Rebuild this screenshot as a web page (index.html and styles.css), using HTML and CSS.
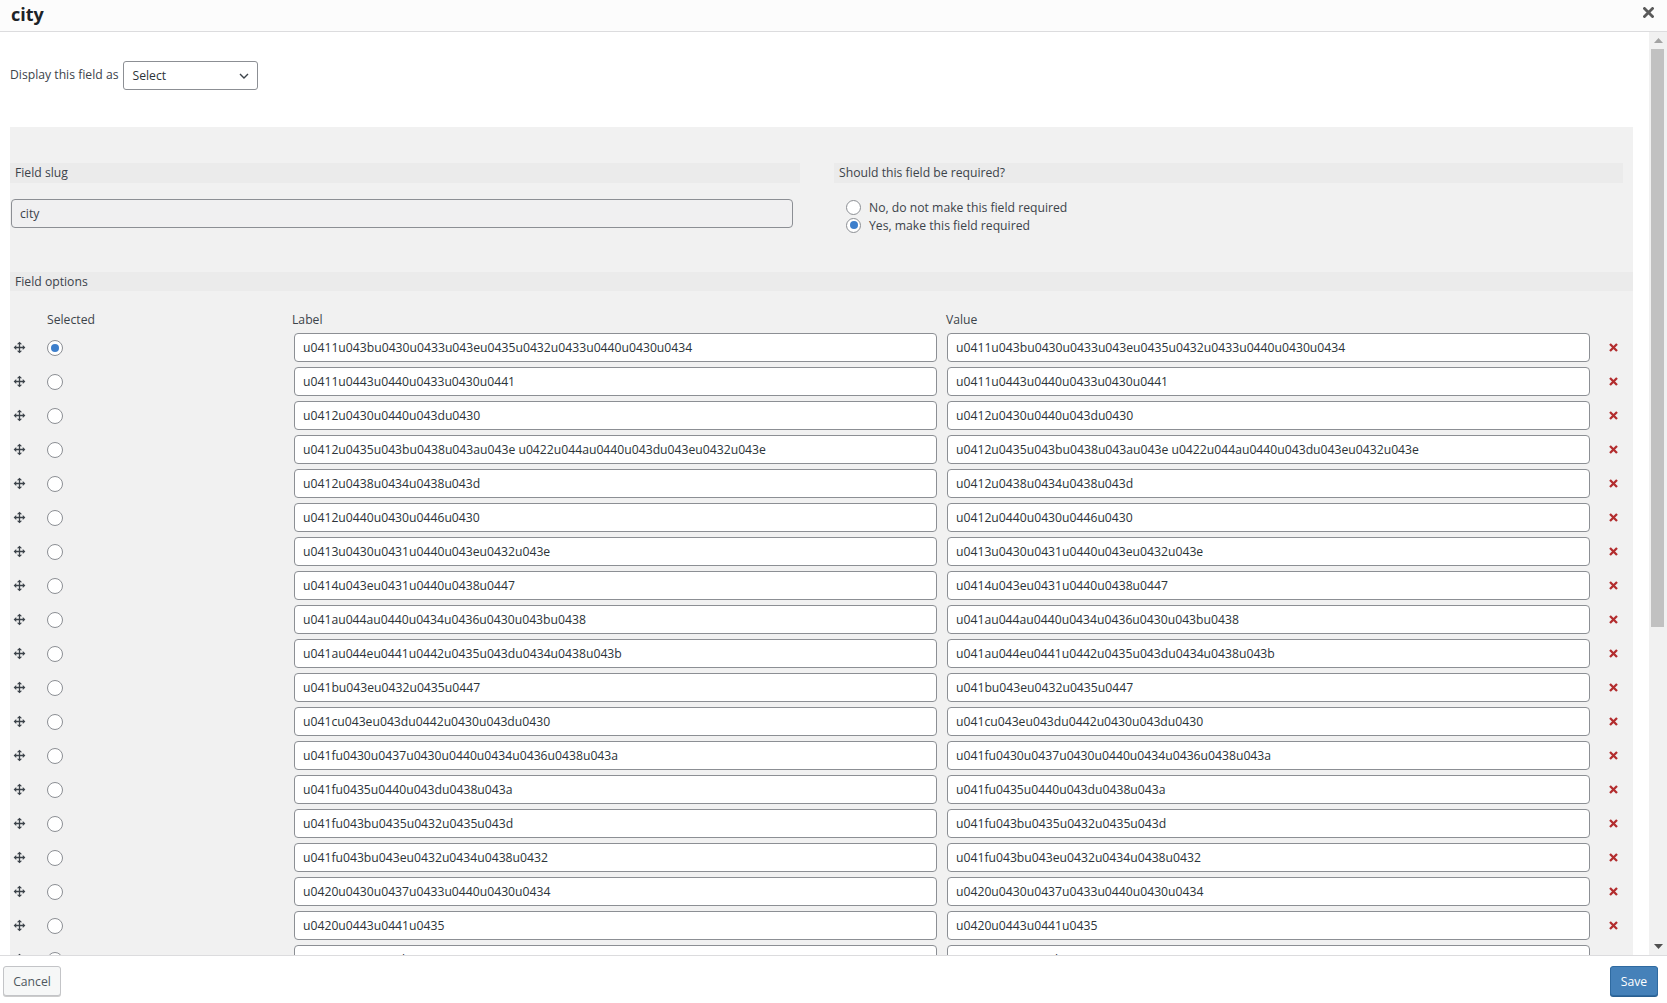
FILE: index.html
```html
<!DOCTYPE html>
<html lang="en">
<head>
<meta charset="utf-8">
<title>city</title>
<link rel="stylesheet" href="styles.css">
</head>
<body>
<div class="modal">
  <header class="modal-header">
    <h1 class="modal-title">city</h1>
    <button class="close-btn" aria-label="Close">
      <svg width="11" height="11" viewBox="0 0 11 11"><path d="M1.5 1.5l8 8M9.5 1.5l-8 8" stroke="#5a5a5a" stroke-width="2.8" stroke-linecap="square"/></svg>
    </button>
  </header>

  <div class="modal-body">
    <div class="content">
      <div class="display-row">
        <span class="display-label">Display this field as</span>
        <div class="select-box">
          <span>Select</span>
          <svg width="10" height="6" viewBox="0 0 10 6"><path d="M1 1l4 4 4-4" fill="none" stroke="#3c434a" stroke-width="1.4"/></svg>
        </div>
      </div>

      <div class="panel">
        <div class="two-col">
          <div class="col">
            <div class="section-bar">Field slug</div>
            <input class="slug-input" type="text" value="city" readonly>
          </div>
          <div class="col">
            <div class="section-bar">Should this field be required?</div>
            <div class="radio-list">
              <div class="radio-line"><span class="radio"></span><span>No, do not make this field required</span></div>
              <div class="radio-line"><span class="radio checked"></span><span>Yes, make this field required</span></div>
            </div>
          </div>
        </div>

        <div class="section-bar options-bar">Field options</div>

        <div class="opt-grid opt-head">
          <span></span>
          <span>Selected</span>
          <span class="head-label">Label</span>
          <span class="head-value">Value</span>
          <span></span>
        </div>

        <div class="opt-rows">
          <div class="opt-grid opt-row"><span class="drag"><svg width="13" height="13" viewBox="0 0 20 20"><path d="M19 10l-4 4v-3h-4v4h3l-4 4-4-4h3v-4H5v3l-4-4 4-4v3h4V5H6l4-4 4 4h-3v4h4V6z" fill="#3c434a"/></svg></span><span class="radio checked"></span><input class="opt-input" type="text" value="u0411u043bu0430u0433u043eu0435u0432u0433u0440u0430u0434"><input class="opt-input value-input" type="text" value="u0411u043bu0430u0433u043eu0435u0432u0433u0440u0430u0434"><span class="del"><svg width="9" height="9" viewBox="0 0 9 9"><path d="M1 1l7 7M8 1l-7 7" stroke="#b32d2e" stroke-width="2.3"/></svg></span></div>
          <div class="opt-grid opt-row"><span class="drag"><svg width="13" height="13" viewBox="0 0 20 20"><path d="M19 10l-4 4v-3h-4v4h3l-4 4-4-4h3v-4H5v3l-4-4 4-4v3h4V5H6l4-4 4 4h-3v4h4V6z" fill="#3c434a"/></svg></span><span class="radio"></span><input class="opt-input" type="text" value="u0411u0443u0440u0433u0430u0441"><input class="opt-input value-input" type="text" value="u0411u0443u0440u0433u0430u0441"><span class="del"><svg width="9" height="9" viewBox="0 0 9 9"><path d="M1 1l7 7M8 1l-7 7" stroke="#b32d2e" stroke-width="2.3"/></svg></span></div>
          <div class="opt-grid opt-row"><span class="drag"><svg width="13" height="13" viewBox="0 0 20 20"><path d="M19 10l-4 4v-3h-4v4h3l-4 4-4-4h3v-4H5v3l-4-4 4-4v3h4V5H6l4-4 4 4h-3v4h4V6z" fill="#3c434a"/></svg></span><span class="radio"></span><input class="opt-input" type="text" value="u0412u0430u0440u043du0430"><input class="opt-input value-input" type="text" value="u0412u0430u0440u043du0430"><span class="del"><svg width="9" height="9" viewBox="0 0 9 9"><path d="M1 1l7 7M8 1l-7 7" stroke="#b32d2e" stroke-width="2.3"/></svg></span></div>
          <div class="opt-grid opt-row"><span class="drag"><svg width="13" height="13" viewBox="0 0 20 20"><path d="M19 10l-4 4v-3h-4v4h3l-4 4-4-4h3v-4H5v3l-4-4 4-4v3h4V5H6l4-4 4 4h-3v4h4V6z" fill="#3c434a"/></svg></span><span class="radio"></span><input class="opt-input" type="text" value="u0412u0435u043bu0438u043au043e u0422u044au0440u043du043eu0432u043e"><input class="opt-input value-input" type="text" value="u0412u0435u043bu0438u043au043e u0422u044au0440u043du043eu0432u043e"><span class="del"><svg width="9" height="9" viewBox="0 0 9 9"><path d="M1 1l7 7M8 1l-7 7" stroke="#b32d2e" stroke-width="2.3"/></svg></span></div>
          <div class="opt-grid opt-row"><span class="drag"><svg width="13" height="13" viewBox="0 0 20 20"><path d="M19 10l-4 4v-3h-4v4h3l-4 4-4-4h3v-4H5v3l-4-4 4-4v3h4V5H6l4-4 4 4h-3v4h4V6z" fill="#3c434a"/></svg></span><span class="radio"></span><input class="opt-input" type="text" value="u0412u0438u0434u0438u043d"><input class="opt-input value-input" type="text" value="u0412u0438u0434u0438u043d"><span class="del"><svg width="9" height="9" viewBox="0 0 9 9"><path d="M1 1l7 7M8 1l-7 7" stroke="#b32d2e" stroke-width="2.3"/></svg></span></div>
          <div class="opt-grid opt-row"><span class="drag"><svg width="13" height="13" viewBox="0 0 20 20"><path d="M19 10l-4 4v-3h-4v4h3l-4 4-4-4h3v-4H5v3l-4-4 4-4v3h4V5H6l4-4 4 4h-3v4h4V6z" fill="#3c434a"/></svg></span><span class="radio"></span><input class="opt-input" type="text" value="u0412u0440u0430u0446u0430"><input class="opt-input value-input" type="text" value="u0412u0440u0430u0446u0430"><span class="del"><svg width="9" height="9" viewBox="0 0 9 9"><path d="M1 1l7 7M8 1l-7 7" stroke="#b32d2e" stroke-width="2.3"/></svg></span></div>
          <div class="opt-grid opt-row"><span class="drag"><svg width="13" height="13" viewBox="0 0 20 20"><path d="M19 10l-4 4v-3h-4v4h3l-4 4-4-4h3v-4H5v3l-4-4 4-4v3h4V5H6l4-4 4 4h-3v4h4V6z" fill="#3c434a"/></svg></span><span class="radio"></span><input class="opt-input" type="text" value="u0413u0430u0431u0440u043eu0432u043e"><input class="opt-input value-input" type="text" value="u0413u0430u0431u0440u043eu0432u043e"><span class="del"><svg width="9" height="9" viewBox="0 0 9 9"><path d="M1 1l7 7M8 1l-7 7" stroke="#b32d2e" stroke-width="2.3"/></svg></span></div>
          <div class="opt-grid opt-row"><span class="drag"><svg width="13" height="13" viewBox="0 0 20 20"><path d="M19 10l-4 4v-3h-4v4h3l-4 4-4-4h3v-4H5v3l-4-4 4-4v3h4V5H6l4-4 4 4h-3v4h4V6z" fill="#3c434a"/></svg></span><span class="radio"></span><input class="opt-input" type="text" value="u0414u043eu0431u0440u0438u0447"><input class="opt-input value-input" type="text" value="u0414u043eu0431u0440u0438u0447"><span class="del"><svg width="9" height="9" viewBox="0 0 9 9"><path d="M1 1l7 7M8 1l-7 7" stroke="#b32d2e" stroke-width="2.3"/></svg></span></div>
          <div class="opt-grid opt-row"><span class="drag"><svg width="13" height="13" viewBox="0 0 20 20"><path d="M19 10l-4 4v-3h-4v4h3l-4 4-4-4h3v-4H5v3l-4-4 4-4v3h4V5H6l4-4 4 4h-3v4h4V6z" fill="#3c434a"/></svg></span><span class="radio"></span><input class="opt-input" type="text" value="u041au044au0440u0434u0436u0430u043bu0438"><input class="opt-input value-input" type="text" value="u041au044au0440u0434u0436u0430u043bu0438"><span class="del"><svg width="9" height="9" viewBox="0 0 9 9"><path d="M1 1l7 7M8 1l-7 7" stroke="#b32d2e" stroke-width="2.3"/></svg></span></div>
          <div class="opt-grid opt-row"><span class="drag"><svg width="13" height="13" viewBox="0 0 20 20"><path d="M19 10l-4 4v-3h-4v4h3l-4 4-4-4h3v-4H5v3l-4-4 4-4v3h4V5H6l4-4 4 4h-3v4h4V6z" fill="#3c434a"/></svg></span><span class="radio"></span><input class="opt-input" type="text" value="u041au044eu0441u0442u0435u043du0434u0438u043b"><input class="opt-input value-input" type="text" value="u041au044eu0441u0442u0435u043du0434u0438u043b"><span class="del"><svg width="9" height="9" viewBox="0 0 9 9"><path d="M1 1l7 7M8 1l-7 7" stroke="#b32d2e" stroke-width="2.3"/></svg></span></div>
          <div class="opt-grid opt-row"><span class="drag"><svg width="13" height="13" viewBox="0 0 20 20"><path d="M19 10l-4 4v-3h-4v4h3l-4 4-4-4h3v-4H5v3l-4-4 4-4v3h4V5H6l4-4 4 4h-3v4h4V6z" fill="#3c434a"/></svg></span><span class="radio"></span><input class="opt-input" type="text" value="u041bu043eu0432u0435u0447"><input class="opt-input value-input" type="text" value="u041bu043eu0432u0435u0447"><span class="del"><svg width="9" height="9" viewBox="0 0 9 9"><path d="M1 1l7 7M8 1l-7 7" stroke="#b32d2e" stroke-width="2.3"/></svg></span></div>
          <div class="opt-grid opt-row"><span class="drag"><svg width="13" height="13" viewBox="0 0 20 20"><path d="M19 10l-4 4v-3h-4v4h3l-4 4-4-4h3v-4H5v3l-4-4 4-4v3h4V5H6l4-4 4 4h-3v4h4V6z" fill="#3c434a"/></svg></span><span class="radio"></span><input class="opt-input" type="text" value="u041cu043eu043du0442u0430u043du0430"><input class="opt-input value-input" type="text" value="u041cu043eu043du0442u0430u043du0430"><span class="del"><svg width="9" height="9" viewBox="0 0 9 9"><path d="M1 1l7 7M8 1l-7 7" stroke="#b32d2e" stroke-width="2.3"/></svg></span></div>
          <div class="opt-grid opt-row"><span class="drag"><svg width="13" height="13" viewBox="0 0 20 20"><path d="M19 10l-4 4v-3h-4v4h3l-4 4-4-4h3v-4H5v3l-4-4 4-4v3h4V5H6l4-4 4 4h-3v4h4V6z" fill="#3c434a"/></svg></span><span class="radio"></span><input class="opt-input" type="text" value="u041fu0430u0437u0430u0440u0434u0436u0438u043a"><input class="opt-input value-input" type="text" value="u041fu0430u0437u0430u0440u0434u0436u0438u043a"><span class="del"><svg width="9" height="9" viewBox="0 0 9 9"><path d="M1 1l7 7M8 1l-7 7" stroke="#b32d2e" stroke-width="2.3"/></svg></span></div>
          <div class="opt-grid opt-row"><span class="drag"><svg width="13" height="13" viewBox="0 0 20 20"><path d="M19 10l-4 4v-3h-4v4h3l-4 4-4-4h3v-4H5v3l-4-4 4-4v3h4V5H6l4-4 4 4h-3v4h4V6z" fill="#3c434a"/></svg></span><span class="radio"></span><input class="opt-input" type="text" value="u041fu0435u0440u043du0438u043a"><input class="opt-input value-input" type="text" value="u041fu0435u0440u043du0438u043a"><span class="del"><svg width="9" height="9" viewBox="0 0 9 9"><path d="M1 1l7 7M8 1l-7 7" stroke="#b32d2e" stroke-width="2.3"/></svg></span></div>
          <div class="opt-grid opt-row"><span class="drag"><svg width="13" height="13" viewBox="0 0 20 20"><path d="M19 10l-4 4v-3h-4v4h3l-4 4-4-4h3v-4H5v3l-4-4 4-4v3h4V5H6l4-4 4 4h-3v4h4V6z" fill="#3c434a"/></svg></span><span class="radio"></span><input class="opt-input" type="text" value="u041fu043bu0435u0432u0435u043d"><input class="opt-input value-input" type="text" value="u041fu043bu0435u0432u0435u043d"><span class="del"><svg width="9" height="9" viewBox="0 0 9 9"><path d="M1 1l7 7M8 1l-7 7" stroke="#b32d2e" stroke-width="2.3"/></svg></span></div>
          <div class="opt-grid opt-row"><span class="drag"><svg width="13" height="13" viewBox="0 0 20 20"><path d="M19 10l-4 4v-3h-4v4h3l-4 4-4-4h3v-4H5v3l-4-4 4-4v3h4V5H6l4-4 4 4h-3v4h4V6z" fill="#3c434a"/></svg></span><span class="radio"></span><input class="opt-input" type="text" value="u041fu043bu043eu0432u0434u0438u0432"><input class="opt-input value-input" type="text" value="u041fu043bu043eu0432u0434u0438u0432"><span class="del"><svg width="9" height="9" viewBox="0 0 9 9"><path d="M1 1l7 7M8 1l-7 7" stroke="#b32d2e" stroke-width="2.3"/></svg></span></div>
          <div class="opt-grid opt-row"><span class="drag"><svg width="13" height="13" viewBox="0 0 20 20"><path d="M19 10l-4 4v-3h-4v4h3l-4 4-4-4h3v-4H5v3l-4-4 4-4v3h4V5H6l4-4 4 4h-3v4h4V6z" fill="#3c434a"/></svg></span><span class="radio"></span><input class="opt-input" type="text" value="u0420u0430u0437u0433u0440u0430u0434"><input class="opt-input value-input" type="text" value="u0420u0430u0437u0433u0440u0430u0434"><span class="del"><svg width="9" height="9" viewBox="0 0 9 9"><path d="M1 1l7 7M8 1l-7 7" stroke="#b32d2e" stroke-width="2.3"/></svg></span></div>
          <div class="opt-grid opt-row"><span class="drag"><svg width="13" height="13" viewBox="0 0 20 20"><path d="M19 10l-4 4v-3h-4v4h3l-4 4-4-4h3v-4H5v3l-4-4 4-4v3h4V5H6l4-4 4 4h-3v4h4V6z" fill="#3c434a"/></svg></span><span class="radio"></span><input class="opt-input" type="text" value="u0420u0443u0441u0435"><input class="opt-input value-input" type="text" value="u0420u0443u0441u0435"><span class="del"><svg width="9" height="9" viewBox="0 0 9 9"><path d="M1 1l7 7M8 1l-7 7" stroke="#b32d2e" stroke-width="2.3"/></svg></span></div>
          <div class="opt-grid opt-row"><span class="drag"><svg width="13" height="13" viewBox="0 0 20 20"><path d="M19 10l-4 4v-3h-4v4h3l-4 4-4-4h3v-4H5v3l-4-4 4-4v3h4V5H6l4-4 4 4h-3v4h4V6z" fill="#3c434a"/></svg></span><span class="radio"></span><input class="opt-input" type="text" value="u0421u0438u043bu0438u0441u0442u0440u0430"><input class="opt-input value-input" type="text" value="u0421u0438u043bu0438u0441u0442u0440u0430"><span class="del"><svg width="9" height="9" viewBox="0 0 9 9"><path d="M1 1l7 7M8 1l-7 7" stroke="#b32d2e" stroke-width="2.3"/></svg></span></div>
          <div class="opt-grid opt-row"><span class="drag"><svg width="13" height="13" viewBox="0 0 20 20"><path d="M19 10l-4 4v-3h-4v4h3l-4 4-4-4h3v-4H5v3l-4-4 4-4v3h4V5H6l4-4 4 4h-3v4h4V6z" fill="#3c434a"/></svg></span><span class="radio"></span><input class="opt-input" type="text" value="u0421u043bu0438u0432u0435u043d"><input class="opt-input value-input" type="text" value="u0421u043bu0438u0432u0435u043d"><span class="del"><svg width="9" height="9" viewBox="0 0 9 9"><path d="M1 1l7 7M8 1l-7 7" stroke="#b32d2e" stroke-width="2.3"/></svg></span></div>
        </div>
      </div>
    </div>

    <div class="scrollbar">
      <div class="sb-arrow"><svg width="9" height="5" viewBox="0 0 9 5"><path d="M0 5L4.5 0 9 5z" fill="#a3a3a3"/></svg></div>
      <div class="sb-track"><div class="sb-thumb"></div></div>
      <div class="sb-arrow"><svg width="9" height="5" viewBox="0 0 9 5"><path d="M0 0h9L4.5 5z" fill="#505050"/></svg></div>
    </div>
  </div>

  <footer class="modal-footer">
    <button class="btn btn-cancel">Cancel</button>
    <button class="btn btn-save">Save</button>
  </footer>
</div>
</body>
</html>
```

FILE: styles.css
```css
* { box-sizing: border-box; }

body {
  margin: 0;
  font-family: "Open Sans", "Noto Sans", sans-serif;
  font-size: 12.2px;
  color: #3c434a;
  background: #fff;
  overflow: hidden;
}

.modal {
  height: 1003px;
  display: flex;
  flex-direction: column;
}

.modal-header {
  flex-shrink: 0;
  height: 32px;
  border-bottom: 1px solid #dcdcde;
  background: #fcfcfc;
  display: flex;
  align-items: center;
  justify-content: space-between;
  padding: 0 13px 0 11px;
}

.modal-title {
  margin: 0;
  font-size: 18px;
  font-weight: 700;
  color: #1d2327;
  line-height: 1;
  position: relative;
  top: -2px;
}

.close-btn {
  border: 0;
  background: none;
  padding: 0;
  width: 11px;
  height: 11px;
  display: flex;
  position: relative;
  top: -3px;
}

.modal-body {
  flex: 1;
  min-height: 0;
  display: flex;
}

.content {
  flex: 1;
  overflow: hidden;
  padding: 0 16px 0 10px;
}

/* display row */
.display-row {
  display: flex;
  align-items: center;
  gap: 5px;
  margin-top: 29px;
  height: 29px;
}

.display-label {
  position: relative;
  top: -1px;
}

.select-box {
  width: 135px;
  height: 29px;
  border: 1px solid #8c8f94;
  border-radius: 3px;
  background: #fff;
  display: flex;
  align-items: center;
  justify-content: space-between;
  padding: 0 8px 0 8px;
  color: #2c3338;
}

/* panel */
.panel {
  margin-top: 37px;
  background: #f1f1f1;
  padding-top: 36px;
}

.two-col {
  display: grid;
  grid-template-columns: 790px 789px;
  column-gap: 34px;
  padding-right: 10px;
}

.section-bar {
  background: #ebebeb;
  height: 20px;
  line-height: 20px;
  padding-left: 5px;
  color: #3c434a;
}

.slug-input {
  display: block;
  margin: 16px 0 0 1px;
  width: 782px;
  height: 29px;
  border: 1px solid #8c8f94;
  border-radius: 4px;
  background: #f0f0f1;
  font: inherit;
  color: #3c434a;
  padding: 0 8px;
  outline: none;
}

.radio-list {
  margin-top: 15px;
  padding-left: 12px;
}

.radio-line {
  display: flex;
  align-items: center;
  gap: 8px;
  height: 18px;
}

.radio {
  display: inline-block;
  width: 16px;
  height: 16px;
  border: 1px solid #8c8f94;
  border-radius: 50%;
  background: #fff;
  position: relative;
  flex-shrink: 0;
}

.radio.checked::after {
  content: "";
  position: absolute;
  left: 3px;
  top: 3px;
  width: 8px;
  height: 8px;
  border-radius: 50%;
  background: #3d7fcc;
}

.radio-line .radio {
  width: 15px;
  height: 15px;
}

.radio-line .radio.checked::after {
  left: 2.5px;
  top: 2.5px;
  width: 8px;
  height: 8px;
}

.options-bar {
  margin-top: 38px;
  height: 19px;
  line-height: 19px;
}

/* options grid */
.opt-grid {
  display: grid;
  grid-template-columns: 27px 237px 643px 643px 33px;
  column-gap: 10px;
  align-items: center;
}

.opt-head {
  margin-top: 20px;
  margin-bottom: 4px;
  height: 18px;
  line-height: 18px;
}

.head-label { margin-left: -2px; }
.head-value { margin-left: -1px; }

.opt-row {
  height: 29px;
  margin-bottom: 5px;
}

.drag {
  display: flex;
  margin-left: 3px;
}

.opt-input {
  width: 643px;
  height: 29px;
  border: 1px solid #8c8f94;
  border-radius: 4px;
  background: #fff;
  font: inherit;
  color: #2c3338;
  padding: 0 8px;
  outline: none;
}

.del {
  display: flex;
  margin-left: 9px;
}

/* scrollbar */
.scrollbar {
  width: 18px;
  background: #f1f1f1;
  display: flex;
  flex-direction: column;
}

.sb-arrow {
  height: 17px;
  display: flex;
  align-items: center;
  justify-content: center;
}

.sb-track {
  flex: 1;
  padding: 0 3px 0 2px;
}

.sb-thumb {
  height: 578px;
  background: #c1c1c1;
}

/* footer */
.modal-footer {
  flex-shrink: 0;
  height: 48px;
  border-top: 1px solid #dcdcde;
  background: #fff;
  display: flex;
  justify-content: space-between;
  align-items: flex-start;
  padding: 10px 9px 0 3px;
}

.btn {
  font: inherit;
  height: 30px;
  border-radius: 3px;
  cursor: pointer;
}

.btn-cancel {
  width: 58px;
  background: #f6f7f7;
  border: 1px solid #c3c4c7;
  box-shadow: 0 1px 0 #ccc;
  color: #50575e;
}

.btn-save {
  width: 48px;
  background: #4581b9;
  border: 1px solid #2f6aa0;
  box-shadow: 0 1px 0 #2a5f90;
  color: #fff;
}
```
